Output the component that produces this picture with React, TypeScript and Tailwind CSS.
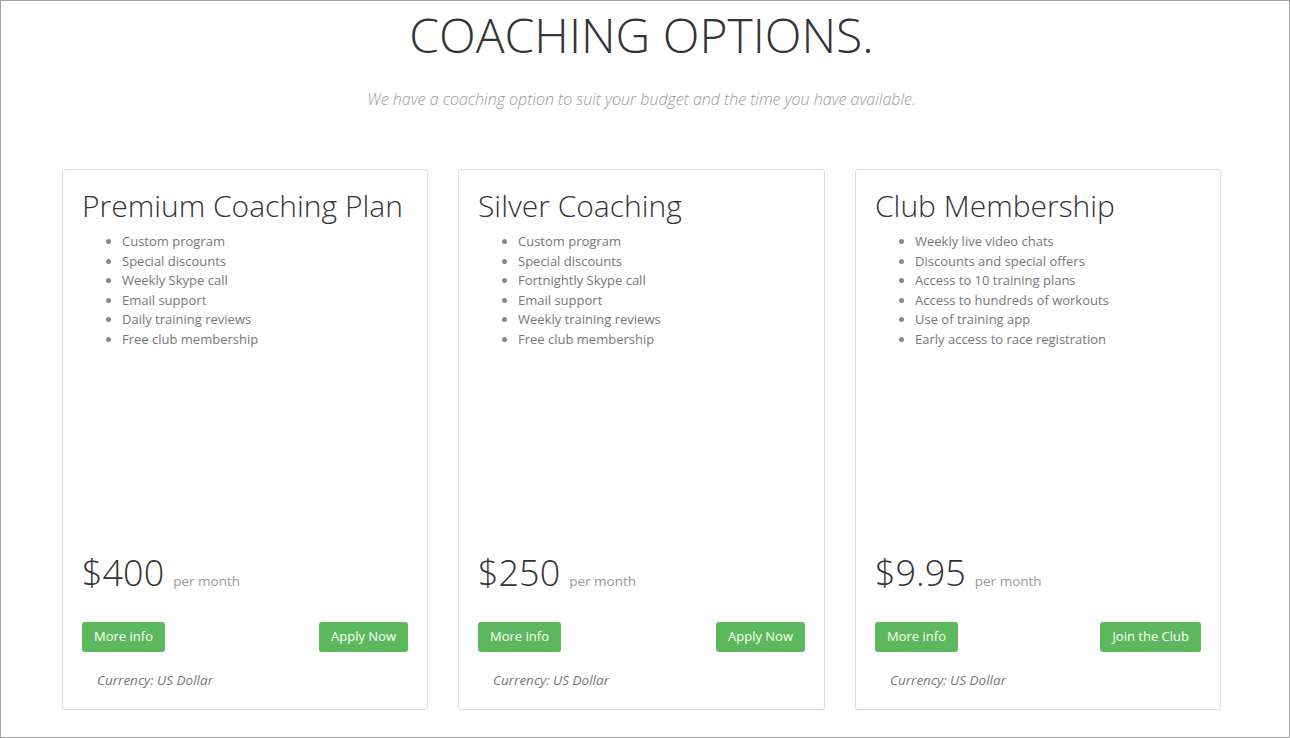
import React from "react";

const plans = [
  {
    title: "Premium Coaching Plan",
    features: [
      "Custom program",
      "Special discounts",
      "Weekly Skype call",
      "Email support",
      "Daily training reviews",
      "Free club membership",
    ],
    price: "$400",
    action: "Apply Now",
  },
  {
    title: "Silver Coaching",
    features: [
      "Custom program",
      "Special discounts",
      "Fortnightly Skype call",
      "Email support",
      "Weekly training reviews",
      "Free club membership",
    ],
    price: "$250",
    action: "Apply Now",
  },
  {
    title: "Club Membership",
    features: [
      "Weekly live video chats",
      "Discounts and special offers",
      "Access to 10 training plans",
      "Access to hundreds of workouts",
      "Use of training app",
      "Early access to race registration",
    ],
    price: "$9.95",
    action: "Join the Club",
  },
];

export default function App() {
  return (
    <div
      className="h-[738px] w-[1290px] overflow-hidden border border-[#a0a0a0] bg-white"
      style={{ fontFamily: '"Open Sans", "Liberation Sans", sans-serif' }}
    >
      <div className="ml-[61px] w-[1159px]">
        {/* Header */}
        <div className="text-center">
          <h1 className="pt-[8px] text-[48px] font-light leading-[1.1] text-[#333]">
            COACHING OPTIONS.
          </h1>
          <p className="mt-[26px] text-[16px] font-light italic leading-[1.4] text-[#999]">
            We have a coaching option to suit your budget and the time you have available.
          </p>
        </div>

        {/* Cards */}
        <div className="mt-[59px] grid grid-cols-[366px_367px_366px] gap-[30px]">
          {plans.map((plan) => (
            <div
              key={plan.title}
              className="flex h-[541px] flex-col rounded-[3px] border border-[#ddd] px-[19px] pt-[19px] pb-[19px]"
            >
              <h3 className="text-[30px] font-light leading-[1.1] text-[#333]">
                {plan.title}
              </h3>
              <ul className="mt-[10px] flex-1 list-disc pl-[40px] text-[13px] leading-[19.5px] text-[#777] marker:text-[#888]">
                {plan.features.map((f) => (
                  <li key={f}>{f}</li>
                ))}
              </ul>

              <div className="flex items-baseline gap-[9px]">
                <span className="text-[36px] font-light leading-[1.1] text-[#333]">
                  {plan.price}
                </span>
                <span className="text-[13.5px] text-[#999]">per month</span>
              </div>

              <div className="mt-[30px] flex items-center justify-between">
                <button className="h-[30px] rounded-[3px] bg-[#5cb85c] px-[12px] text-[13px] text-white">
                  More info
                </button>
                <button className="h-[30px] rounded-[3px] bg-[#5cb85c] px-[12px] text-[13px] text-white">
                  {plan.action}
                </button>
              </div>

              <p className="mt-[18px] pl-[15px] text-[13.5px] italic leading-[20px] text-[#777]">
                Currency: US Dollar
              </p>
            </div>
          ))}
        </div>
      </div>
    </div>
  );
}
